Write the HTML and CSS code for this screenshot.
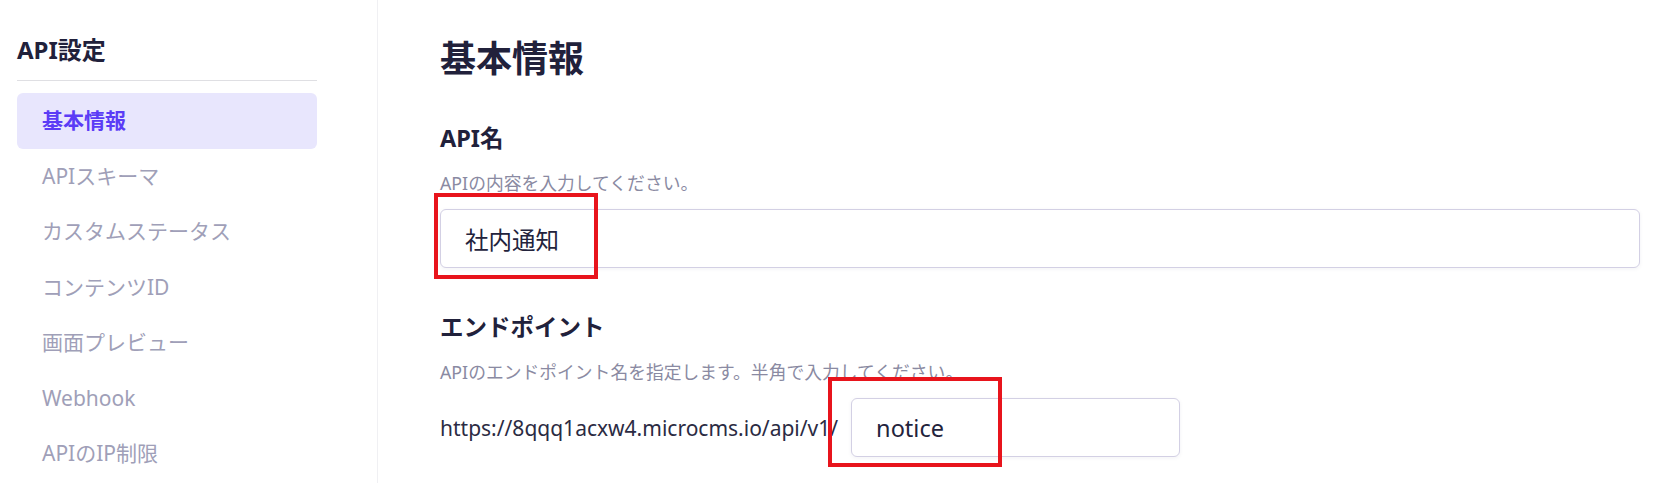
FILE: index.html
```html
<!DOCTYPE html>
<html lang="ja">
<head>
    <meta charset="UTF-8">
    <meta name="viewport" content="width=device-width, initial-scale=1.0">
    <title>API設定 - 基本情報</title>
    <link rel="stylesheet" href="styles.css">
</head>
<body>
    <div class="layout">
        <aside class="sidebar">
            <h2 class="sidebar-title">API設定</h2>
            <nav class="side-nav">
                <a class="side-item active" href="#">基本情報</a>
                <a class="side-item" href="#">APIスキーマ</a>
                <a class="side-item" href="#">カスタムステータス</a>
                <a class="side-item" href="#">コンテンツID</a>
                <a class="side-item" href="#">画面プレビュー</a>
                <a class="side-item" href="#">Webhook</a>
                <a class="side-item" href="#">APIのIP制限</a>
            </nav>
        </aside>

        <main class="content">
            <h1 class="page-title">基本情報</h1>

            <section class="field">
                <h3 class="field-label">API名</h3>
                <p class="field-desc">APIの内容を入力してください。</p>
                <div class="input-wrap">
                    <input class="text-input" type="text" value="社内通知">
                    <span class="highlight highlight-name"></span>
                </div>
            </section>

            <section class="field">
                <h3 class="field-label">エンドポイント</h3>
                <p class="field-desc">APIのエンドポイント名を指定します。半角で入力してください。</p>
                <div class="endpoint-row">
                    <span class="endpoint-base">https://8qqq1acxw4.microcms.io/api/v1/</span>
                    <div class="input-wrap">
                        <input class="text-input endpoint-input" type="text" value="notice">
                        <span class="highlight highlight-endpoint"></span>
                    </div>
                </div>
            </section>
        </main>
    </div>
</body>
</html>
```

FILE: styles.css
```css
body {
    margin: 0;
    background-color: #fff;
    font-family: "Noto Sans", "Noto Sans CJK JP", sans-serif;
    color: #21213b;
}
.layout {
    display: flex;
    min-height: 483px;
}
.sidebar {
    width: 300px;
    flex-shrink: 0;
    padding: 33px 60px 0 17px;
    border-right: 1px solid #f0f0f3;
}
.sidebar-title {
    margin: 0;
    padding-bottom: 13px;
    border-bottom: 1px solid #dfdfe3;
    font-size: 24px;
    line-height: 34px;
    font-weight: bold;
}
.side-nav {
    display: flex;
    flex-direction: column;
    margin-top: 12px;
}
.side-item {
    display: block;
    padding: 11px 25px;
    font-size: 21px;
    line-height: 33.5px;
    color: #a09fb8;
    text-decoration: none;
    border-radius: 6px;
}
.side-item.active {
    background-color: #e8e6fd;
    color: #5b3cf6;
    font-weight: bold;
}
.content {
    flex: 1;
    padding: 32px 16px 0 62px;
}
.page-title {
    margin: 0;
    font-size: 36px;
    line-height: 54px;
    font-weight: bold;
}
.field {
    margin-top: 35px;
}
.field + .field {
    margin-top: 42px;
}
.field-label {
    margin: 0;
    font-size: 23.5px;
    line-height: 34px;
    font-weight: bold;
}
.field-desc {
    margin: 15px 0 13px;
    font-size: 17.8px;
    line-height: 26px;
    color: #8a8aa2;
}
.input-wrap {
    position: relative;
}
.text-input {
    display: block;
    box-sizing: border-box;
    width: 100%;
    height: 59px;
    padding: 0 24px;
    border: 1px solid #d3d0e4;
    border-radius: 6px;
    box-shadow: 0 1px 4px rgba(40, 30, 90, 0.06);
    font-family: "Noto Sans", "Noto Sans CJK JP", sans-serif;
    font-size: 23.5px;
    color: #23233c;
    background-color: #fff;
    outline: none;
}
.endpoint-row {
    display: flex;
    align-items: center;
    gap: 13px;
}
.endpoint-base {
    font-size: 21px;
    color: #2b2b43;
}
.endpoint-input {
    width: 329px;
}
.highlight {
    position: absolute;
    border: 4px solid #e8141c;
    box-sizing: border-box;
    pointer-events: none;
}
.highlight-name {
    left: -6px;
    top: -16px;
    width: 164px;
    height: 86px;
}
.highlight-endpoint {
    left: -23px;
    top: -21px;
    width: 174px;
    height: 90px;
}
```
